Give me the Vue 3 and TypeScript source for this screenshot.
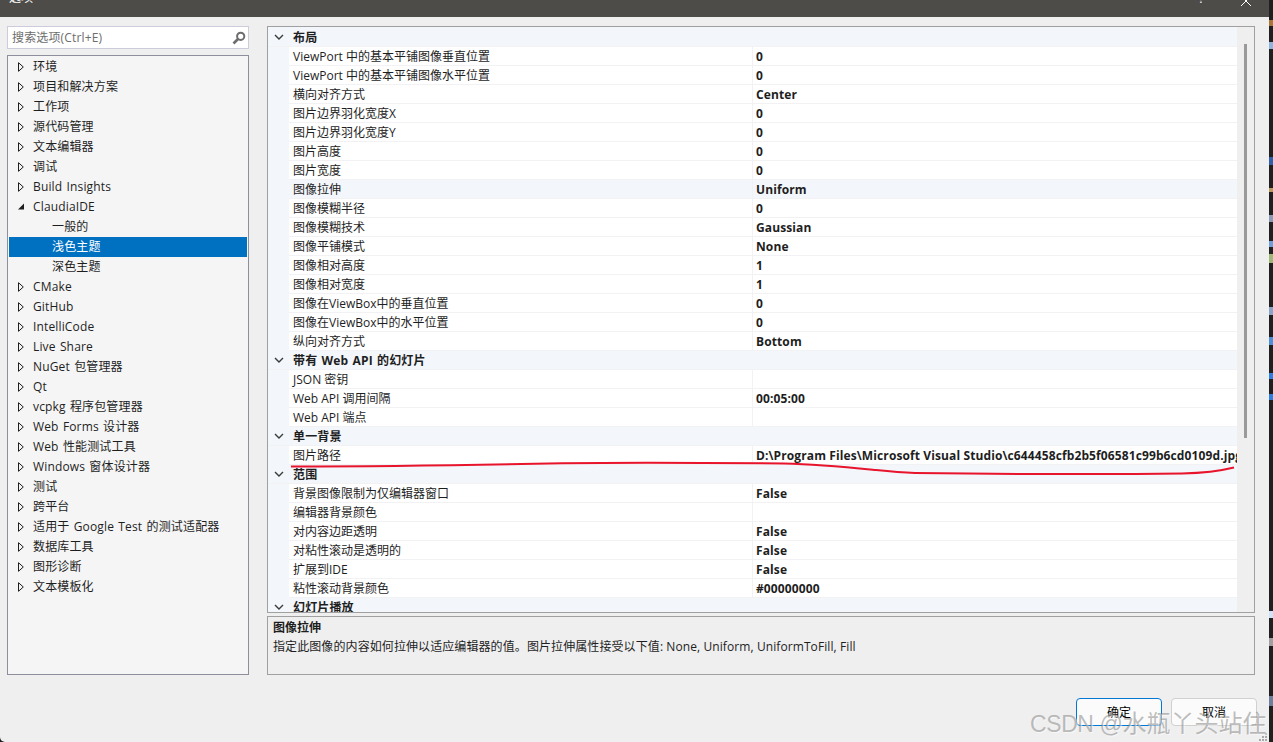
<script setup lang="ts">
interface TreeItem { label: string; mark: 'closed' | 'open' | 'none'; child?: boolean; selected?: boolean }
interface Row { name: string; value?: string; cat?: boolean; active?: boolean }
interface Bit { top: number; height: number; color: string }

const tree: TreeItem[] = [
  { label: '环境', mark: 'closed' },
  { label: '项目和解决方案', mark: 'closed' },
  { label: '工作项', mark: 'closed' },
  { label: '源代码管理', mark: 'closed' },
  { label: '文本编辑器', mark: 'closed' },
  { label: '调试', mark: 'closed' },
  { label: 'Build Insights', mark: 'closed' },
  { label: 'ClaudiaIDE', mark: 'open' },
  { label: '一般的', mark: 'none', child: true },
  { label: '浅色主题', mark: 'none', child: true, selected: true },
  { label: '深色主题', mark: 'none', child: true },
  { label: 'CMake', mark: 'closed' },
  { label: 'GitHub', mark: 'closed' },
  { label: 'IntelliCode', mark: 'closed' },
  { label: 'Live Share', mark: 'closed' },
  { label: 'NuGet 包管理器', mark: 'closed' },
  { label: 'Qt', mark: 'closed' },
  { label: 'vcpkg 程序包管理器', mark: 'closed' },
  { label: 'Web Forms 设计器', mark: 'closed' },
  { label: 'Web 性能测试工具', mark: 'closed' },
  { label: 'Windows 窗体设计器', mark: 'closed' },
  { label: '测试', mark: 'closed' },
  { label: '跨平台', mark: 'closed' },
  { label: '适用于 Google Test 的测试适配器', mark: 'closed' },
  { label: '数据库工具', mark: 'closed' },
  { label: '图形诊断', mark: 'closed' },
  { label: '文本模板化', mark: 'closed' },
]

const rows: Row[] = [
  { name: '布局', cat: true },
  { name: 'ViewPort 中的基本平铺图像垂直位置', value: '0' },
  { name: 'ViewPort 中的基本平铺图像水平位置', value: '0' },
  { name: '横向对齐方式', value: 'Center' },
  { name: '图片边界羽化宽度X', value: '0' },
  { name: '图片边界羽化宽度Y', value: '0' },
  { name: '图片高度', value: '0' },
  { name: '图片宽度', value: '0' },
  { name: '图像拉伸', value: 'Uniform', active: true },
  { name: '图像模糊半径', value: '0' },
  { name: '图像模糊技术', value: 'Gaussian' },
  { name: '图像平铺模式', value: 'None' },
  { name: '图像相对高度', value: '1' },
  { name: '图像相对宽度', value: '1' },
  { name: '图像在ViewBox中的垂直位置', value: '0' },
  { name: '图像在ViewBox中的水平位置', value: '0' },
  { name: '纵向对齐方式', value: 'Bottom' },
  { name: '带有 Web API 的幻灯片', cat: true },
  { name: 'JSON 密钥', value: '' },
  { name: 'Web API 调用间隔', value: '00:05:00' },
  { name: 'Web API 端点', value: '' },
  { name: '单一背景', cat: true },
  { name: '图片路径', value: 'D:\\Program Files\\Microsoft Visual Studio\\c644458cfb2b5f06581c99b6cd0109d.jpg' },
  { name: '范围', cat: true },
  { name: '背景图像限制为仅编辑器窗口', value: 'False' },
  { name: '编辑器背景颜色', value: '' },
  { name: '对内容边距透明', value: 'False' },
  { name: '对粘性滚动是透明的', value: 'False' },
  { name: '扩展到IDE', value: 'False' },
  { name: '粘性滚动背景颜色', value: '#00000000' },
  { name: '幻灯片播放', cat: true },
]

const bits: Bit[] = [
  { top: 20, height: 6, color: '#a8763c' },
  { top: 42, height: 7, color: '#8fb4e0' },
  { top: 157, height: 8, color: '#2f5fa8' },
  { top: 188, height: 4, color: '#b89a62' },
  { top: 215, height: 7, color: '#8b9bb5' },
  { top: 241, height: 6, color: '#6f9fd8' },
  { top: 254, height: 9, color: '#9fb878' },
  { top: 307, height: 8, color: '#8ba4c8' },
  { top: 337, height: 8, color: '#4f8fd8' },
  { top: 373, height: 6, color: '#2f7fe0' },
  { top: 394, height: 6, color: '#2f7fe0' },
  { top: 611, height: 7, color: '#cfe4f8' },
  { top: 638, height: 8, color: '#a0a0a0' },
  { top: 696, height: 10, color: '#6f7f9a' },
]
</script>

<template>
  <div class="screen">
    <div class="dialog">
      <header class="titlebar">
        <span class="title">选项</span>
        <span class="help">?</span>
        <svg class="close" width="12" height="12" viewBox="0 0 12 12">
          <path d="M1 1 L11 11 M11 1 L1 11" stroke="#ffffff" stroke-width="1" fill="none" />
        </svg>
      </header>

      <main class="body">
        <aside class="left">
          <div class="search">
            <span class="search-text">搜索选项(Ctrl+E)</span>
            <svg width="14" height="14" viewBox="0 0 14 14">
              <circle cx="8.7" cy="5.3" r="3.6" fill="none" stroke="#6d6d6d" stroke-width="2" />
              <path d="M6 8 L1.5 12.5" stroke="#6d6d6d" stroke-width="2.6" />
            </svg>
          </div>
          <ul class="tree">
            <li v-for="item in tree" :key="item.label" class="node" :class="{ selected: item.selected, child: item.child }">
              <svg v-if="item.mark === 'closed'" class="mark" width="6" height="10" viewBox="0 0 6 10">
                <path d="M0.5 0.7 L5.3 5 L0.5 9.3 Z" fill="#f5f5f5" stroke="#1e1e1e" stroke-width="1" />
              </svg>
              <svg v-else-if="item.mark === 'open'" class="mark" width="6" height="10" viewBox="0 0 6 10">
                <path d="M0 7.5 L6 1.5 L6 7.5 Z" fill="#1e1e1e" />
              </svg>
              <span class="node-label">{{ item.label }}</span>
            </li>
          </ul>
        </aside>

        <section class="right">
          <div class="grid">
            <div class="rows">
              <div v-for="row in rows" :key="row.name" class="row" :class="{ cat: row.cat, active: row.active }">
                <template v-if="row.cat">
                  <svg class="chev" width="10" height="6" viewBox="0 0 10 6">
                    <path d="M1 1 L5 5 L9 1" fill="none" stroke="#3a3a3a" stroke-width="1.4" />
                  </svg>
                  <span class="cat-name">{{ row.name }}</span>
                </template>
                <template v-else>
                  <span class="name">{{ row.name }}</span>
                  <span class="value">{{ row.value }}</span>
                </template>
              </div>
            </div>
            <div class="scrollbar"><div class="thumb"></div></div>
          </div>
          <div class="desc">
            <div class="desc-title">图像拉伸</div>
            <div class="desc-text">指定此图像的内容如何拉伸以适应编辑器的值。图片拉伸属性接受以下值: None, Uniform, UniformToFill, Fill</div>
          </div>
        </section>
      </main>

      <footer class="footer">
        <button class="btn primary">确定</button>
        <button class="btn">取消</button>
      </footer>
    </div>

    <div class="strip">
      <i v-for="b in bits" :key="b.top" class="bit" :style="{ top: b.top + 'px', height: b.height + 'px', background: b.color }"></i>
    </div>

    <svg class="scribble" width="1273" height="742" viewBox="0 0 1273 742">
      <path d="M291 466.5 C 380 466.5, 480 465, 562 463.2 C 640 462, 740 463, 784 463.5 C 820 464.5, 850 467.5, 876 470 C 890 471.5, 900 472.5, 915 473 C 1000 474, 1110 474.5, 1182 473.5 C 1205 473, 1222 470.5, 1234 467.5" fill="none" stroke="#e8142c" stroke-width="2" />
      <g fill="#a9a9a9">
        <rect x="1265" y="733" width="2" height="2" />
        <rect x="1262" y="736" width="2" height="2" />
        <rect x="1265" y="736" width="2" height="2" />
        <rect x="1259" y="739" width="2" height="2" />
        <rect x="1262" y="739" width="2" height="2" />
        <rect x="1265" y="739" width="2" height="2" />
      </g>
    </svg>
    <div class="watermark"><span class="wm-latin">CSDN @</span><span class="wm-cjk">水瓶丫头站住</span></div>
  </div>
</template>

<style>
html, body { margin: 0; padding: 0; background: #1e1e1e; }
</style>

<style scoped>
.screen {
  position: relative;
  width: 1273px;
  height: 742px;
  overflow: hidden;
  background: #1f1f1f;
  font-family: "Open Sans", "Noto Sans CJK SC", sans-serif;
  font-size: 12px;
  color: #1e1e1e;
}
.dialog {
  width: 1269px;
  height: 742px;
  display: flex;
  flex-direction: column;
  background: #efefef;
  border-bottom-left-radius: 5px;
}
.titlebar {
  height: 17px;
  flex: none;
  display: flex;
  align-items: flex-start;
  background: #4d4c49;
  color: #fff;
  overflow: hidden;
  padding-left: 9px;
}
.title { font-size: 12px; line-height: 17px; margin-top: -11px; }
.help { margin-left: auto; margin-top: -10px; line-height: 17px; font-size: 12px; }
.close { margin: -5px 17px 0 36px; flex: none; }
.body {
  flex: none;
  height: 658px;
  display: flex;
  padding: 9px 14px 0 7px;
  gap: 18px;
  box-sizing: border-box;
}
.left { width: 242px; flex: none; display: flex; flex-direction: column; gap: 6px; height: 649px; }
.search {
  height: 23px;
  flex: none;
  box-sizing: border-box;
  border: 1px solid #ccccdc;
  background: #fff;
  display: flex;
  align-items: center;
  justify-content: space-between;
  padding: 0 2px 0 4px;
  color: #6d6d6d;
}
.search-text { line-height: 21px; letter-spacing: 0.15px; }
.tree {
  flex: 1;
  margin: 0;
  padding: 1px;
  list-style: none;
  box-sizing: border-box;
  border: 1px solid #8e8f9c;
  background: #f5f5f5;
}
.node {
  height: 20px;
  display: flex;
  align-items: center;
  padding-left: 9px;
  gap: 9px;
  white-space: nowrap;
}
.node-label { margin-bottom: 2px; letter-spacing: 0.15px; word-spacing: 1px; }
.node.child { padding-left: 43px; }
.node.selected { background: #0070c0; color: #fff; }
.mark { flex: none; width: 6px; }
.right { width: 988px; flex: none; display: flex; flex-direction: column; gap: 3px; height: 649px; }
.grid {
  height: 587px;
  flex: none;
  display: flex;
  box-sizing: border-box;
  border: 1px solid #a0a0a0;
  overflow: hidden;
}
.rows { flex: 1; min-width: 0; background: #f3f6fb; padding-top: 1px; }
.row {
  height: 19px;
  display: flex;
  align-items: center;
  box-sizing: border-box;
  border-bottom: 1px solid #f2f2f5;
  background: #fff;
  margin-left: 21px;
  white-space: nowrap;
  overflow: hidden;
  line-height: 18px;
}
.row.cat { background: #f3f6fb; margin-left: 0; }
.row.active { background: #f3f6fb; }
.chev { margin-left: 6px; flex: none; }
.cat-name { margin-left: 9px; font-weight: 700; padding-top: 1px; letter-spacing: 0.15px; word-spacing: 1px; }
.name {
  width: 464px;
  flex: none;
  padding: 1px 0 0 4px;
  box-sizing: border-box;
  border-right: 1px solid #f2f2f5;
  height: 18px;
}
.value {
  padding: 1px 0 0 3px;
  box-sizing: border-box;
  font-weight: 700;
  height: 18px;
  overflow: hidden;
  flex: 1;
  min-width: 0;
  letter-spacing: 0.11px;
}
.scrollbar { width: 17px; flex: none; background: #efefef; padding-top: 17px; display: flex; justify-content: center; }
.thumb { width: 3px; height: 394px; background: #9a9a9a; }
.desc {
  height: 59px;
  flex: none;
  box-sizing: border-box;
  border: 1px solid #a0a0a0;
  padding: 1px 5px;
  line-height: 19px;
}
.desc-title { font-weight: 700; }
.desc-text { letter-spacing: 0.09px; }
.footer {
  flex: 1;
  display: flex;
  justify-content: flex-end;
  gap: 9px;
  padding: 23px 12px 0 0;
}
.btn {
  width: 86px;
  height: 28px;
  box-sizing: border-box;
  border: 1px solid #d0d0d0;
  border-radius: 4px;
  background: #fbfbfb;
  font: inherit;
  color: #000;
  padding: 0;
}
.btn.primary { border-color: #0078d4; }
.strip { position: absolute; left: 1269px; top: 0; width: 4px; height: 742px; background: #202020; }
.bit { position: absolute; left: 0; width: 4px; }
.scribble { position: absolute; left: 0; top: 0; pointer-events: none; }
.watermark {
  position: absolute;
  left: 1030px;
  top: 705px;
  line-height: 34px;
  color: rgba(125, 125, 125, 0.5);
  text-shadow: 1px 1px 1px rgba(255, 255, 255, 0.6);
  white-space: nowrap;
  pointer-events: none;
}
.wm-latin { font-family: "Liberation Sans", sans-serif; font-size: 23px; letter-spacing: -0.4px; }
.wm-cjk { font-family: "Noto Sans CJK SC", sans-serif; font-size: 24px; }
</style>
